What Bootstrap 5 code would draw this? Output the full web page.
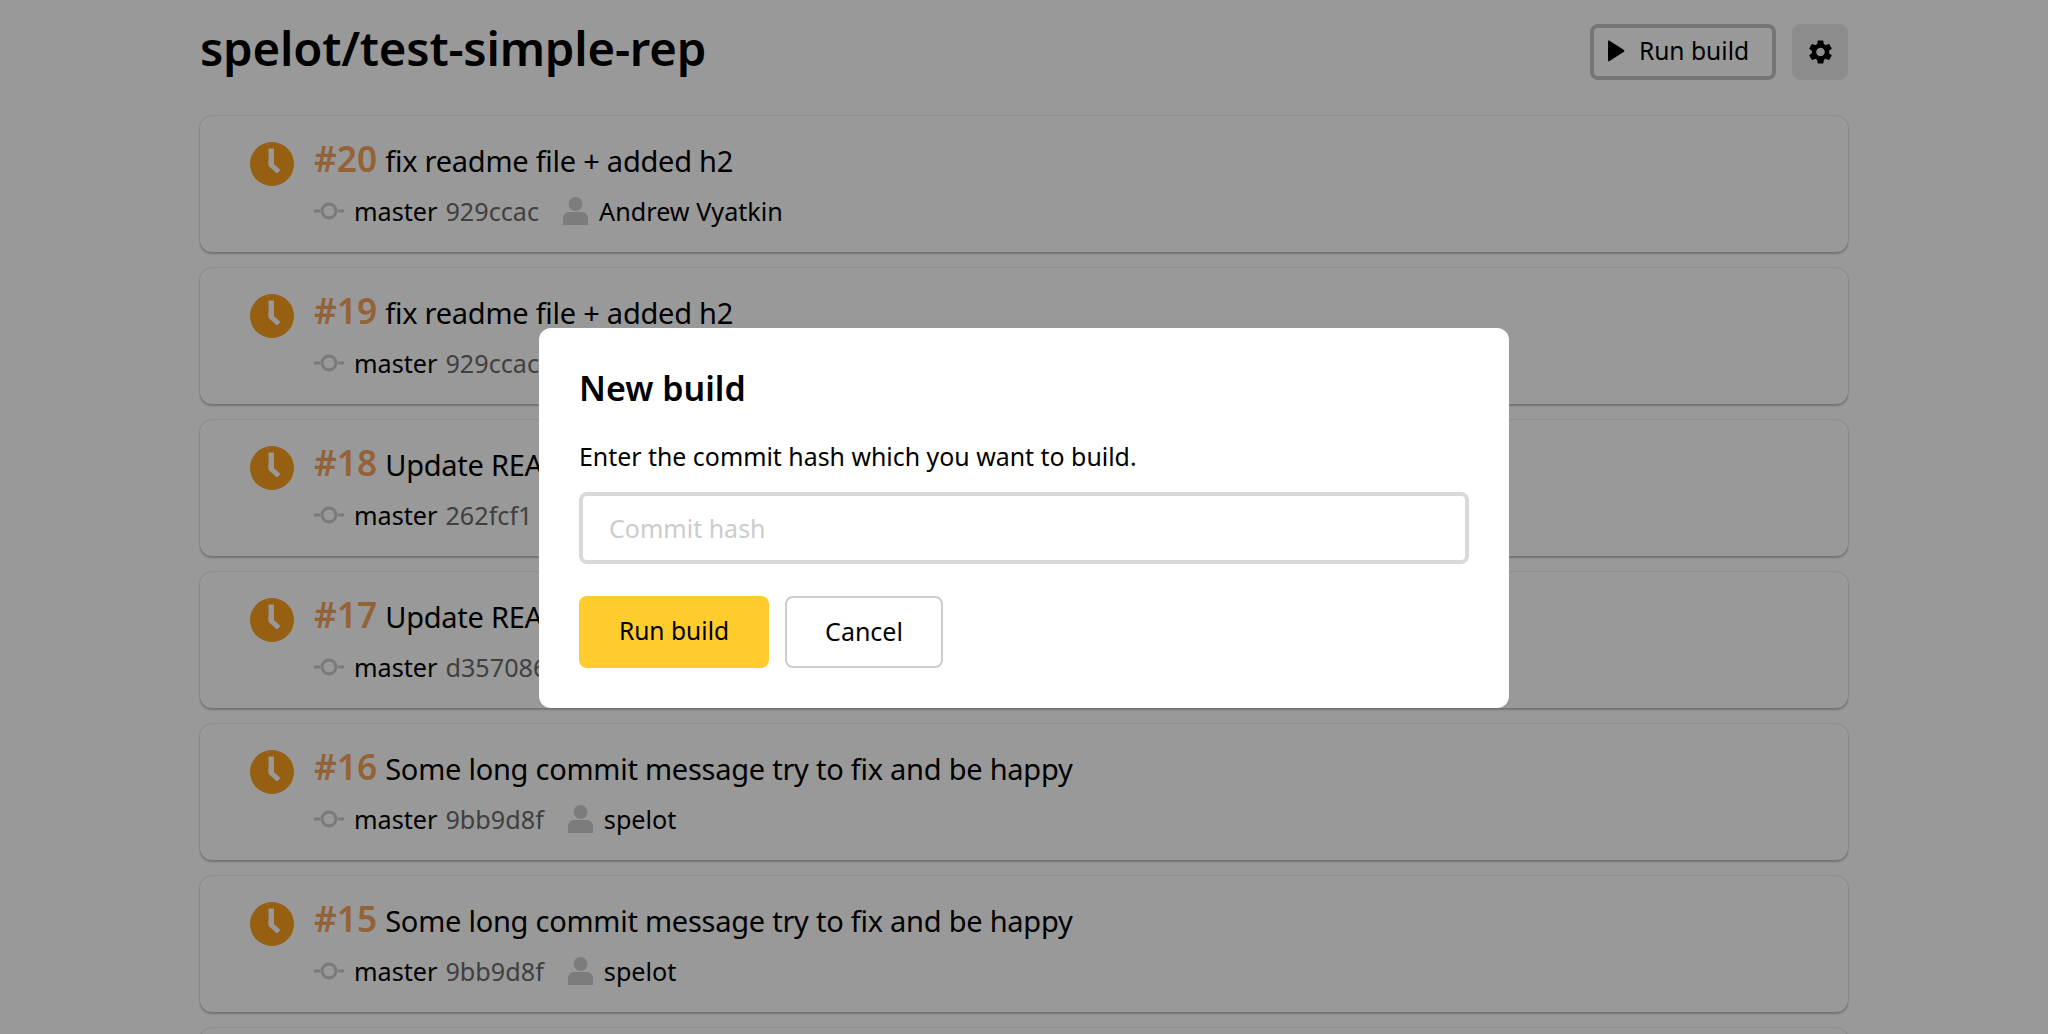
<!doctype html>
<html lang="en">
<head>
<meta charset="utf-8">
<title>spelot/test-simple-rep</title>
<link href="https://cdn.jsdelivr.net/npm/bootstrap@5.3.0/dist/css/bootstrap.min.css" rel="stylesheet">
<style>
html,body{height:1034px;overflow:hidden}
body{font-family:"Noto Sans","Open Sans",sans-serif;background:#fff;color:#000;font-size:25px;line-height:36px}
.page-wrap{width:1648px;margin:0 auto;padding-top:24px}
.page-head{height:56px;margin-bottom:36px}
.repo-title{font-size:47.300px;line-height:56px;font-weight:600;margin:-9px 0 0;letter-spacing:-.2px}
.btn-run{height:56px;width:186px;border:4px solid #c4c4c4;border-radius:8px;background:transparent;color:#000;font-size:24.600px;line-height:32px;padding:0 10px 2px 0}
.btn-run-icon{margin-right:14px}
.btn-gear{width:56px;height:56px;border:0;border-radius:8px;background:#ebebeb;padding:0}
.build-card{height:136px;border-radius:12px;background:#fff;box-shadow:0 2px 2px rgba(67,68,69,.3),0 0 2px rgba(67,68,69,.3);padding:26px 50px}
.build-status{width:44px;height:44px;flex:none;margin-right:20px}
.build-body{margin-top:-6px}
.build-num{font-size:35.300px;line-height:44px;font-weight:600;color:#f7a35c;margin-right:8px}
.build-msg{font-size:29px;line-height:44px;letter-spacing:-.25px}
.build-line{height:44px;white-space:nowrap}
.build-meta{margin-top:13px;height:36px;font-size:25.200px;line-height:36px}
.build-hash{color:#6b6b6b;margin-left:8px;margin-right:24px}
.icon-branch{width:30px;height:18px;margin-right:10px}
.icon-user{width:25px;height:28px;margin-right:11px}
.dim-layer{position:fixed;inset:0;background:rgba(0,0,0,.4);z-index:1050}
.dlg-box{position:fixed;z-index:1060;left:539px;top:328px;width:970px;height:380px;margin:0;background:#fff;border:0;border-radius:12px;padding:40px}
.dlg-title{font-size:34px;line-height:40px;font-weight:600;margin:0 0 30px}
.dlg-text{font-size:24.900px;line-height:36px;margin:0 0 18px}
.dlg-input{height:72px;border:4px solid #d9d9d9;border-radius:8px;padding:0 26px;font-size:25px;box-shadow:none;color:#000}
.dlg-input::placeholder{color:#ccc}
.dlg-actions{margin-top:32px;gap:16px}
.btn-primary-y{width:190px;height:72px;border:0;border-radius:8px;background:#ffcc2e;color:#000;font-size:24.600px;padding:0 0 3px}
.btn-cancel{width:158px;height:72px;border:2px solid #ccc;border-radius:8px;background:#fff;color:#000;font-size:25px;padding:0 0 3px}
</style>
</head>
<body>
<svg width="0" height="0" class="position-absolute">
<defs>
<symbol id="i-clock" viewBox="0 0 44 44"><circle cx="22" cy="22" r="22" fill="#fa9e1f"/><path d="M18.500 6.500H24V22l6.500 6-3.500 3.500-8.500-7.500z" fill="#fff"/></symbol>
<symbol id="i-branch" viewBox="0 0 30 18"><path d="M0 7.500h6v3H0zM24 7.500h6v3h-6z" fill="#ccc"/><circle cx="15" cy="9" r="7" fill="none" stroke="#ccc" stroke-width="3"/></symbol>
<symbol id="i-user" viewBox="0 0 25 28"><circle cx="12.500" cy="7" r="7" fill="#cfcfcf"/><path d="M0 28v-6.500c0-4 3-6.500 6.500-6.500h12c3.500 0 6.500 2.500 6.500 6.500V28z" fill="#cfcfcf"/></symbol>
</defs>
</svg>

<div class="page-wrap">
  <header class="page-head d-flex align-items-center justify-content-between">
    <h1 class="repo-title">spelot/test-simple-rep</h1>
    <div class="d-flex gap-3">
      <button class="btn-run d-flex align-items-center justify-content-center" type="button">
        <svg width="18" height="22" viewBox="0 0 18 22" class="btn-run-icon"><path d="M1 1.500c0-.8.800-1.200 1.500-.8l14.500 9.300c.6.400.6 1.300 0 1.700L2.500 21c-.7.400-1.500 0-1.500-.800z" fill="#000"/></svg>Run build
      </button>
      <button class="btn-gear d-flex align-items-center justify-content-center" type="button" aria-label="Settings">
        <svg width="23" height="24" viewBox="2.400 2 19.200 20"><path fill="#000" d="M19.140 12.940c.04-.3.06-.61.06-.94 0-.32-.02-.64-.07-.94l2.030-1.580c.18-.14.23-.41.12-.61l-1.920-3.320c-.12-.22-.37-.29-.59-.22l-2.390.96c-.5-.38-1.030-.7-1.620-.94l-.36-2.540c-.04-.24-.24-.41-.48-.41h-3.840c-.24 0-.43.17-.47.41l-.36 2.540c-.59.24-1.130.57-1.620.94l-2.390-.96c-.22-.08-.47 0-.59.22L2.740 8.870c-.12.21-.08.47.12.61l2.030 1.580c-.05.3-.09.63-.09.94s.02.64.07.94l-2.030 1.580c-.18.14-.23.41-.12.61l1.920 3.320c.12.22.37.29.59.22l2.390-.96c.5.38 1.030.7 1.620.94l.36 2.540c.05.24.24.41.48.41h3.840c.24 0 .44-.17.47-.41l.36-2.540c.59-.24 1.130-.56 1.620-.94l2.390.96c.22.08.47 0 .59-.22l1.920-3.320c.12-.22.07-.47-.12-.61l-2.010-1.580zM12 15.600c-1.980 0-3.600-1.620-3.600-3.600s1.620-3.600 3.600-3.600 3.600 1.620 3.600 3.600-1.620 3.600-3.600 3.600z"/></svg>
      </button>
    </div>
  </header>

  <div class="d-flex flex-column gap-3">
    <article class="build-card d-flex">
      <svg class="build-status"><use href="#i-clock"/></svg>
      <div class="build-body"><div class="build-line"><span class="build-num">#20</span><span class="build-msg">fix readme file + added h2</span></div>
      <div class="build-meta d-flex align-items-center"><svg class="icon-branch"><use href="#i-branch"/></svg><span>master</span><span class="build-hash">929ccac</span><svg class="icon-user"><use href="#i-user"/></svg><span>Andrew Vyatkin</span></div></div>
    </article>
    <article class="build-card d-flex">
      <svg class="build-status"><use href="#i-clock"/></svg>
      <div class="build-body"><div class="build-line"><span class="build-num">#19</span><span class="build-msg">fix readme file + added h2</span></div>
      <div class="build-meta d-flex align-items-center"><svg class="icon-branch"><use href="#i-branch"/></svg><span>master</span><span class="build-hash">929ccac</span><svg class="icon-user"><use href="#i-user"/></svg><span>Andrew Vyatkin</span></div></div>
    </article>
    <article class="build-card d-flex">
      <svg class="build-status"><use href="#i-clock"/></svg>
      <div class="build-body"><div class="build-line"><span class="build-num">#18</span><span class="build-msg">Update README.md</span></div>
      <div class="build-meta d-flex align-items-center"><svg class="icon-branch"><use href="#i-branch"/></svg><span>master</span><span class="build-hash">262fcf1</span><svg class="icon-user"><use href="#i-user"/></svg><span>spelot</span></div></div>
    </article>
    <article class="build-card d-flex">
      <svg class="build-status"><use href="#i-clock"/></svg>
      <div class="build-body"><div class="build-line"><span class="build-num">#17</span><span class="build-msg">Update README.md</span></div>
      <div class="build-meta d-flex align-items-center"><svg class="icon-branch"><use href="#i-branch"/></svg><span>master</span><span class="build-hash">d357086</span><svg class="icon-user"><use href="#i-user"/></svg><span>spelot</span></div></div>
    </article>
    <article class="build-card d-flex">
      <svg class="build-status"><use href="#i-clock"/></svg>
      <div class="build-body"><div class="build-line"><span class="build-num">#16</span><span class="build-msg">Some long commit message try to fix and be happy</span></div>
      <div class="build-meta d-flex align-items-center"><svg class="icon-branch"><use href="#i-branch"/></svg><span>master</span><span class="build-hash">9bb9d8f</span><svg class="icon-user"><use href="#i-user"/></svg><span>spelot</span></div></div>
    </article>
    <article class="build-card d-flex">
      <svg class="build-status"><use href="#i-clock"/></svg>
      <div class="build-body"><div class="build-line"><span class="build-num">#15</span><span class="build-msg">Some long commit message try to fix and be happy</span></div>
      <div class="build-meta d-flex align-items-center"><svg class="icon-branch"><use href="#i-branch"/></svg><span>master</span><span class="build-hash">9bb9d8f</span><svg class="icon-user"><use href="#i-user"/></svg><span>spelot</span></div></div>
    </article>
    <article class="build-card d-flex"></article>
  </div>
</div>

<div class="dim-layer"></div>
<section class="dlg-box" role="dialog" aria-modal="true">
  <h2 class="dlg-title">New build</h2>
  <p class="dlg-text">Enter the commit hash which you want to build.</p>
  <input class="form-control dlg-input" type="text" placeholder="Commit hash">
  <div class="dlg-actions d-flex">
    <button class="btn-primary-y" type="button">Run build</button>
    <button class="btn-cancel" type="button">Cancel</button>
  </div>
</section>
</body>
</html>
